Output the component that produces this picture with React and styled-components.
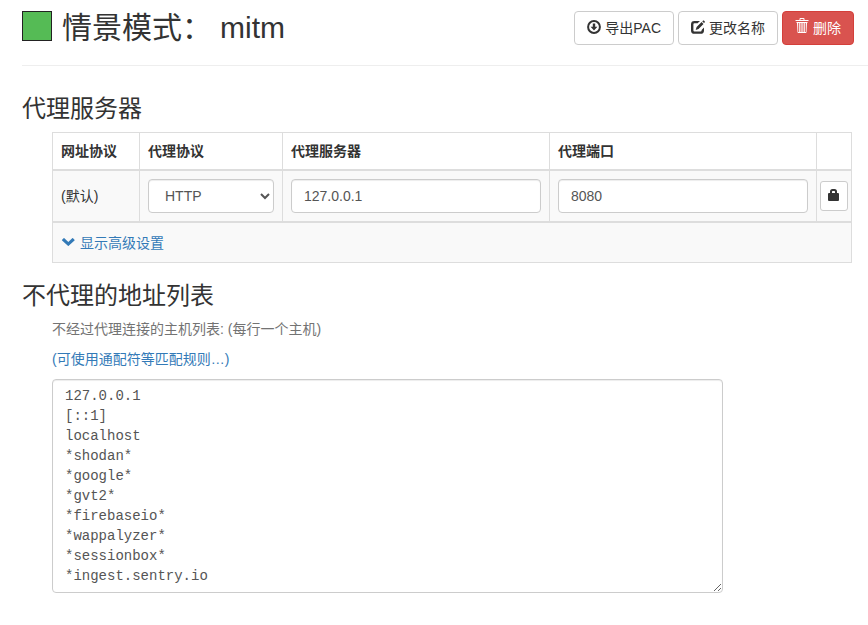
import React, { useState } from "react";
import styled, { createGlobalStyle, css } from "styled-components";

const GlobalStyle = createGlobalStyle`
  *, *::before, *::after { box-sizing: border-box; }
  body {
    margin: 0;
    background: #fff;
    color: #333;
    font-family: "Liberation Sans", "Noto Sans CJK SC", sans-serif;
    font-size: 14px;
    line-height: 20px;
  }
  button, input, select, textarea { font-family: inherit; font-size: inherit; line-height: inherit; margin: 0; }
`;

const Page = styled.main`
  padding: 11px 0 32px 22px;
`;

const Header = styled.header`
  display: flex;
  align-items: flex-start;
  justify-content: space-between;
  gap: 16px;
  padding: 0 14px 20px 0;
`;

const Divider = styled.hr`
  height: 1px;
  margin: 0 0 28px;
  border: 0;
  background: #eee;
`;

const Title = styled.h2`
  display: flex;
  align-items: center;
  gap: 10px;
  height: 34px;
  margin: 0;
  font-size: 30px;
  font-weight: 400;
  line-height: 34px;
`;

const Swatch = styled.span`
  align-self: flex-start;
  width: 30px;
  height: 30px;
  border: 1px solid #222;
  background: #5b5;
`;

const ProfileName = styled.span`
  margin-left: -2px;
`;

const Actions = styled.div`
  display: flex;
  flex-shrink: 0;
  gap: 4px;
`;

const Button = styled.button`
  display: inline-flex;
  align-items: center;
  justify-content: center;
  gap: 4px;
  padding: 6px 12px;
  border: 1px solid ${(p) => (p.$danger ? "#d43f3a" : "#ccc")};
  border-radius: 4px;
  background: ${(p) => (p.$danger ? "#d9534f" : "#fff")};
  color: ${(p) => (p.$danger ? "#fff" : "#333")};
  white-space: nowrap;
  cursor: pointer;
`;

const LockButton = styled(Button)`
  width: 28px;
  height: 30px;
  padding: 0;
  border-radius: 3px;
  vertical-align: middle;
`;

const Icon = styled.svg`
  flex: none;
  width: 14px;
  height: 14px;
  fill: currentColor;
`;

const ButtonIcon = styled(Icon)`
  margin-bottom: 2px;
`;

const TrashIcon = styled(Icon)`
  height: 16px;
  margin-bottom: 4px;
`;

const SectionTitle = styled.h3`
  margin: 0;
  font-size: 24px;
  font-weight: 400;
  line-height: 30px;
`;

const SectionBody = styled.div`
  padding: 8px 16px 0 30px;
`;

const Table = styled.table`
  width: 100%;
  margin-bottom: 18px;
  table-layout: fixed;
  border-collapse: collapse;
  border: 1px solid #ddd;
`;

const Col = styled.col`
  width: ${(p) => p.$width};
`;

const HeadCell = styled.th`
  padding: 8px;
  border: 1px solid #ddd;
  border-bottom-width: 2px;
  text-align: left;
`;

const Cell = styled.td`
  padding: ${(p) => (p.$tight ? "8px 0" : "8px")};
  border: 1px solid #ddd;
  background: #f9f9f9;
  text-align: ${(p) => (p.$tight ? "center" : "left")};
`;

const FooterCell = styled(Cell)`
  padding: 10px 8px 9px;
  border-top-width: 2px;
`;

const control = css`
  display: block;
  border: 1px solid #ccc;
  border-radius: 4px;
  background: #fff;
  color: #555;
  box-shadow: inset 0 1px 1px rgba(0, 0, 0, 0.075);
`;

const TextInput = styled.input`
  ${control}
  width: 100%;
  height: 34px;
  padding: 6px 12px;
`;

const Select = styled.select`
  ${control}
  width: 100%;
  height: 34px;
  padding: 6px 0 6px 12px;
`;

const Link = styled.a`
  display: inline-flex;
  align-items: center;
  gap: 5px;
  color: #337ab7;
  text-decoration: none;
  vertical-align: top;
  &:hover { text-decoration: underline; }
`;

const Help = styled.label`
  display: block;
  margin-bottom: 10px;
  color: #737373;
`;

const LinkLine = styled.p`
  margin: 0 0 10px;
`;

const HostList = styled.textarea`
  ${control}
  width: 671px;
  max-width: 100%;
  padding: 6px 12px;
  font-family: "Liberation Mono", monospace;
  resize: both;
  overflow: auto;
`;

const hosts = [
  "127.0.0.1", "[::1]", "localhost", "*shodan*", "*google*", "*gvt2*",
  "*firebaseio*", "*wappalyzer*", "*sessionbox*", "*ingest.sentry.io",
].join("\n");

export default function App() {
  const [protocol, setProtocol] = useState("HTTP");
  return (
    <>
      <GlobalStyle />
      <Page>
        <Header>
          <Title>
            <Swatch />
            <span>情景模式：</span>
            <ProfileName>mitm</ProfileName>
          </Title>
          <Actions>
            <Button type="button">
              <ButtonIcon viewBox="0 0 14 14" aria-hidden="true">
                <circle cx="7" cy="7" r="5.9" fill="none" stroke="currentColor" strokeWidth="2" />
                <path d="M5.8 3.6h2.4v3.200h2.200L7 10.600 3.600 6.800h2.200z" />
              </ButtonIcon>
              导出PAC
            </Button>
            <Button type="button">
              <ButtonIcon viewBox="0 0 14 14" aria-hidden="true">
                <path d="M9 .9H3.400A3.400 3.400 0 0 0 0 4.300v6.100a3.400 3.400 0 0 0 3.400 3.400h6.200a3.400 3.400 0 0 0 3.400-3.400V7.600l-2.400 2.400v.4a1 1 0 0 1-1 1H3.400a1 1 0 0 1-1-1V4.300a1 1 0 0 1 1-1h3.200z" />
                <path d="M10.600 2.100l1.900 1.900-5 5-2.800.9.900-2.800zM11.300 1.400l.8-.8q.4-.4.8 0l.9.900q.3.400 0 .8l-.8.800z" />
              </ButtonIcon>
              更改名称
            </Button>
            <Button type="button" $danger>
              <TrashIcon viewBox="0 0 14 16" aria-hidden="true">
                <path d="M4.500 2V1q0-1 1-1h3q1 0 1 1v1h4v1H.5V2zM5.500 1v1h3V1z" fillRule="evenodd" />
                <path d="M1.500 4h11v1h-.5l-.5 9.200q-.1.800-.9.800H3.400q-.8 0-.9-.8L2 5h-.5zM3.200 5v9h1V5zm2.200 0v9h1V5zm2.200 0v9h1V5zm2.200 0v9h1V5z" fillRule="evenodd" />
              </TrashIcon>
              删除
            </Button>
          </Actions>
        </Header>
        <Divider />

        <section>
          <SectionTitle>代理服务器</SectionTitle>
          <SectionBody>
            <Table>
              <colgroup>
                <Col $width="87px" />
                <Col $width="143px" />
                <Col $width="auto" />
                <Col $width="auto" />
                <Col $width="35px" />
              </colgroup>
              <thead>
                <tr>
                  <HeadCell scope="col">网址协议</HeadCell>
                  <HeadCell scope="col">代理协议</HeadCell>
                  <HeadCell scope="col">代理服务器</HeadCell>
                  <HeadCell scope="col">代理端口</HeadCell>
                  <HeadCell as="td" />
                </tr>
              </thead>
              <tbody>
                <tr>
                  <Cell>(默认)</Cell>
                  <Cell>
                    <Select aria-label="代理协议" value={protocol} onChange={(e) => setProtocol(e.target.value)}>
                      <option>HTTP</option>
                      <option>HTTPS</option>
                      <option>SOCKS4</option>
                      <option>SOCKS5</option>
                    </Select>
                  </Cell>
                  <Cell><TextInput type="text" aria-label="代理服务器" defaultValue="127.0.0.1" /></Cell>
                  <Cell><TextInput type="text" inputMode="numeric" aria-label="代理端口" defaultValue="8080" /></Cell>
                  <Cell $tight>
                    <LockButton type="button" aria-label="代理登录">
                      <ButtonIcon viewBox="0 0 14 14" aria-hidden="true">
                        <path d="M2 5h1V3.500A2.500 2.500 0 0 1 5.500 1h2A2.500 2.500 0 0 1 10 3.500V5h1q1 0 1 1v6q0 1-1 1H2q-1 0-1-1V6q0-1 1-1zm3 0h3V3.700a.7.700 0 0 0-.7-.7H5.700a.7.700 0 0 0-.7.700z" fillRule="evenodd" />
                      </ButtonIcon>
                    </LockButton>
                  </Cell>
                </tr>
              </tbody>
              <tfoot>
                <tr>
                  <FooterCell colSpan={5}>
                    <Link href="#advanced">
                      <ButtonIcon viewBox="0 0 14 14" aria-hidden="true">
                        <path d="M1.100 4.700l1.500-1.500q.4-.4.800 0L7.300 7l3.900-3.800q.4-.4.800 0l1.500 1.500q.4.400 0 .8l-5.800 5.300q-.4.400-.8 0L1.100 5.500q-.4-.4 0-.8z" />
                      </ButtonIcon>
                      显示高级设置
                    </Link>
                  </FooterCell>
                </tr>
              </tfoot>
            </Table>
          </SectionBody>
        </section>

        <section>
          <SectionTitle>不代理的地址列表</SectionTitle>
          <SectionBody>
            <Help htmlFor="bypass-hosts">不经过代理连接的主机列表: (每行一个主机)</Help>
            <LinkLine><Link href="#patterns">(可使用通配符等匹配规则…)</Link></LinkLine>
            <HostList id="bypass-hosts" rows={10} spellCheck={false} defaultValue={hosts} />
          </SectionBody>
        </section>
      </Page>
    </>
  );
}
